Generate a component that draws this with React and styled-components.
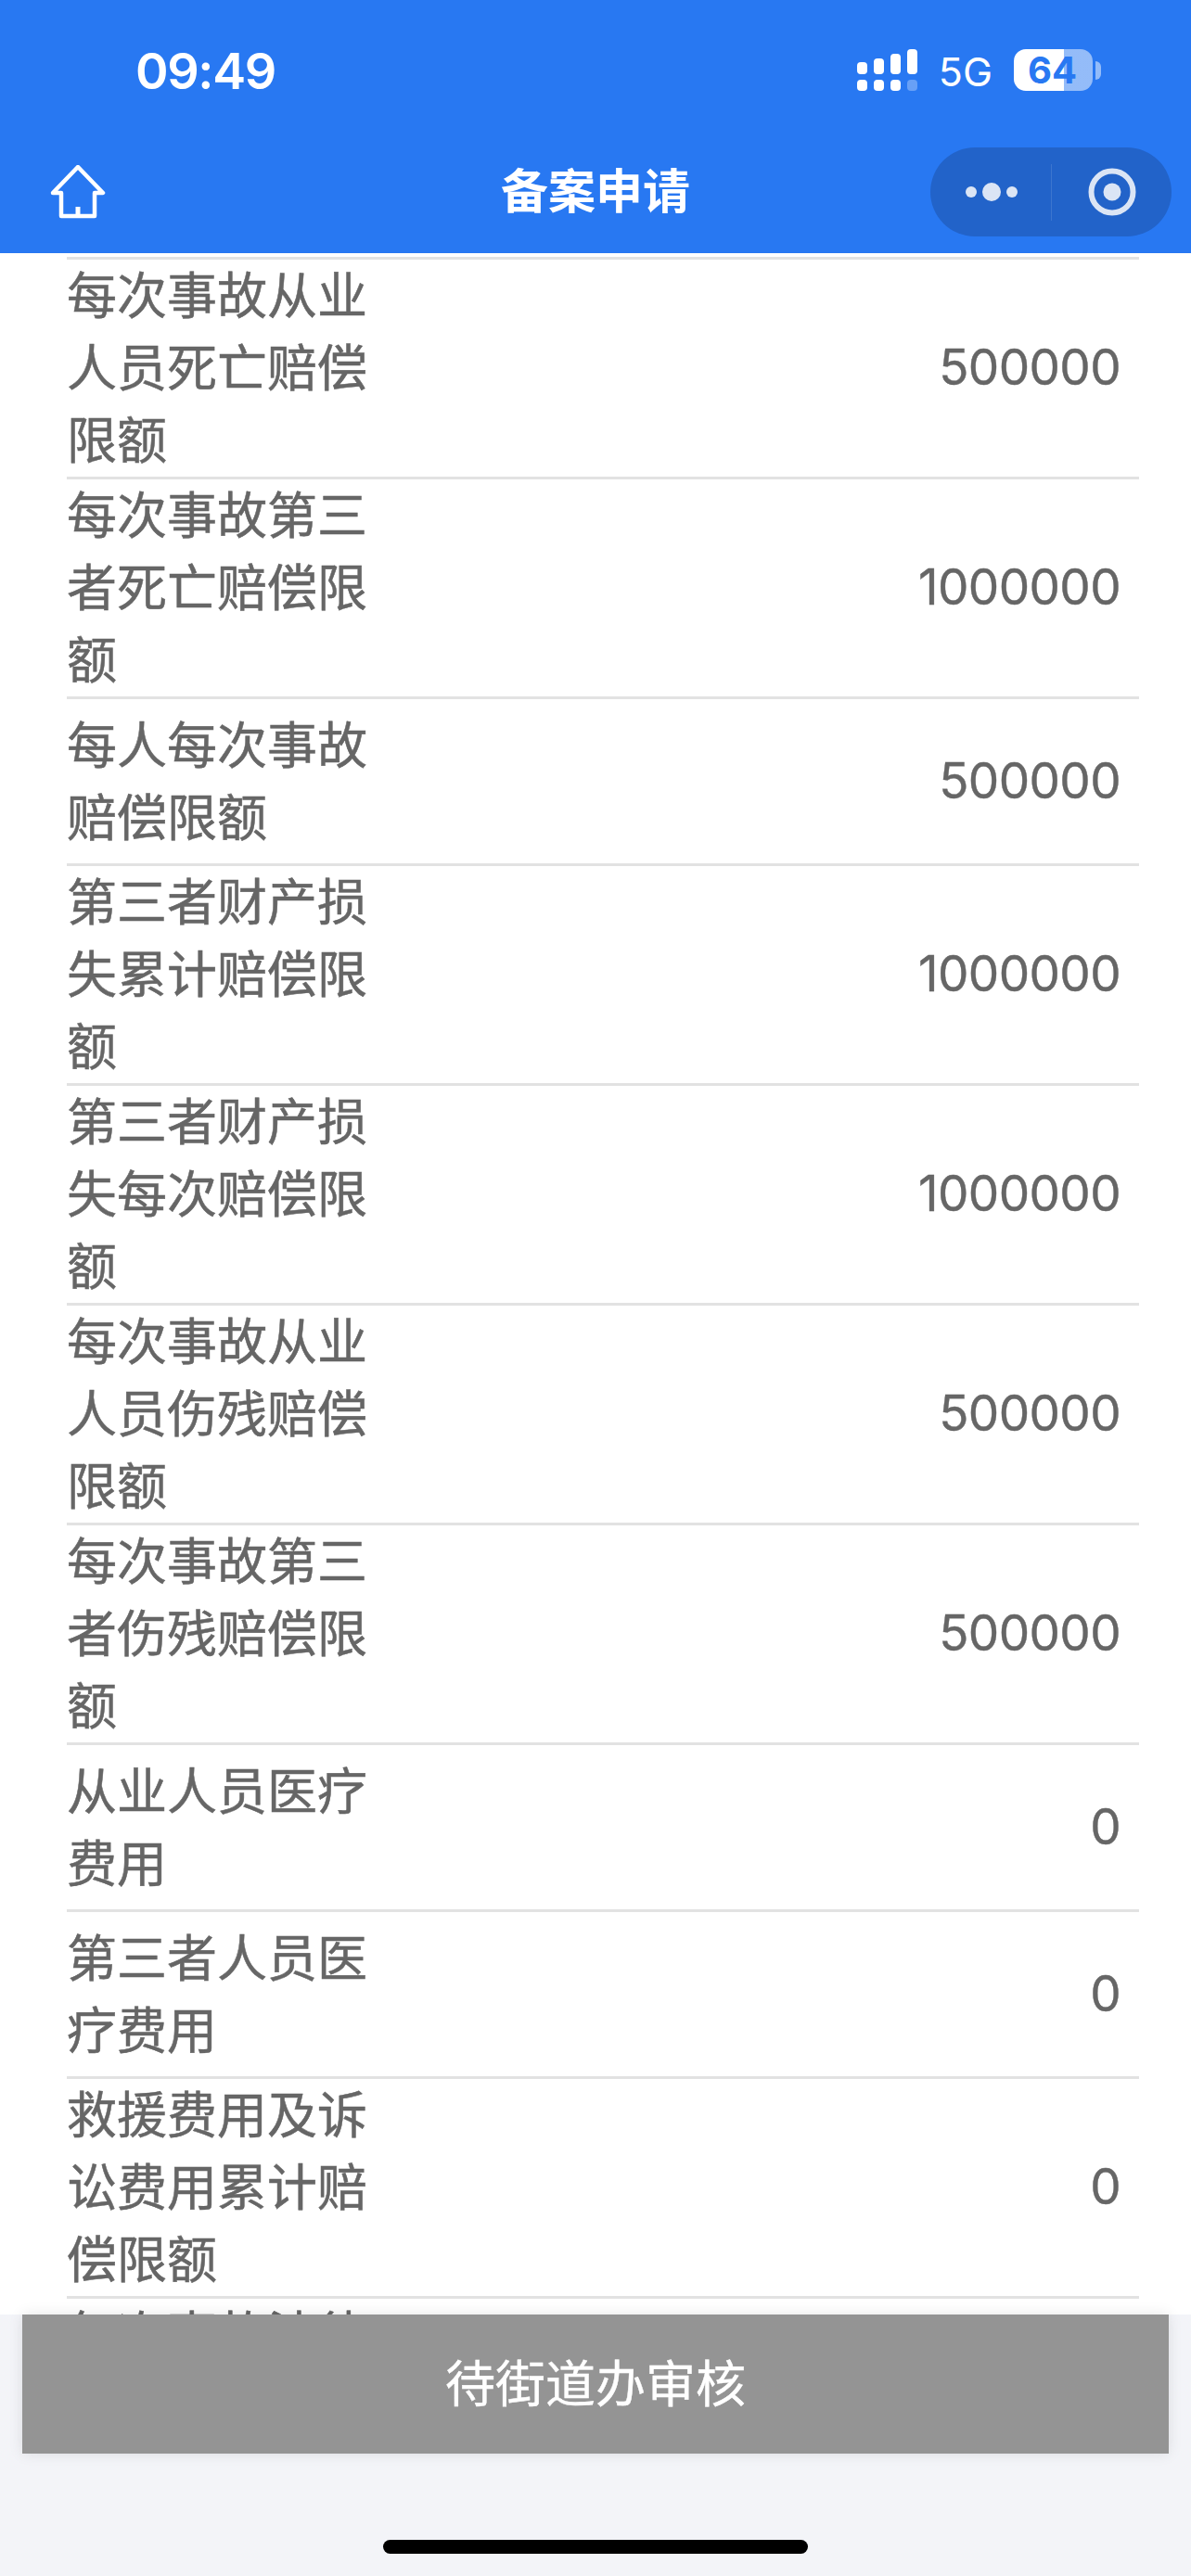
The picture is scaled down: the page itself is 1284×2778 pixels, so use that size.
import React from "react";
import styled, { createGlobalStyle } from "styled-components";

const Global = createGlobalStyle`
  html, body { margin: 0; padding: 0; background: #f3f4f8; }
  * { box-sizing: border-box; }
`;

const CJK = `"Inter", "Noto Sans CJK SC", sans-serif`;

const Page = styled.div`
  width: 1284px;
  height: 2778px;
  display: flex;
  flex-direction: column;
  overflow: hidden;
  font-family: ${CJK};
  background: #fff;
`;

const Header = styled.header`
  flex: 0 0 273px;
  background: #2878f2;
  display: flex;
  flex-direction: column;
  color: #fff;
`;

const StatusBar = styled.div`
  height: 159px;
  padding: 0 97px 0 146px;
  display: flex;
  align-items: flex-start;
  justify-content: space-between;
`;

const Clock = styled.div`
  margin-top: 44px;
  font-size: 54px;
  line-height: 66px;
  font-weight: 600;
  letter-spacing: -1.4px;
`;

const StatusRight = styled.div`
  margin-top: 53px;
  display: flex;
  align-items: flex-start;
`;

const Network = styled.div`
  margin: 1px 23px 0 22px;
  font-size: 43px;
  line-height: 46px;
  font-weight: 400;
`;

const Battery = styled.div`
  position: relative;
  width: 85px;
  height: 45px;
  border-radius: 13px;
  overflow: hidden;
  background: linear-gradient(90deg, #fff 0 54px, rgba(255, 255, 255, 0.5) 54px 100%);
  color: #2878f2;
  font-size: 40px;
  line-height: 45px;
  font-weight: 700;
  text-align: center;
  padding-right: 2px;
`;

const BatteryNub = styled.div`
  width: 6px;
  height: 20px;
  margin: 13px 0 0 3px;
  border-radius: 0 10px 10px 0;
  background: rgba(255, 255, 255, 0.5);
`;

const NavBar = styled.div`
  flex: 1;
  display: flex;
  align-items: flex-start;
  justify-content: space-between;
  padding: 0 21px 0 54px;
  position: relative;
`;

const Title = styled.div`
  position: absolute;
  left: 0;
  right: 0;
  top: 19px;
  text-align: center;
  font-size: 51px;
  line-height: 58px;
  font-weight: 600;
`;

const HomeButton = styled.div`
  margin-top: 19px;
  width: 60px;
  height: 58px;
`;

const Capsule = styled.div`
  width: 260px;
  height: 96px;
  border-radius: 48px;
  background: #2263c9;
  display: flex;
  align-items: center;
`;

const CapsuleCell = styled.div`
  flex: 1;
  height: 61px;
  display: flex;
  align-items: center;
  justify-content: center;
  padding-left: ${(p) => (p.$end ? "0" : "1px")};
`;

const CapsuleDivider = styled.div`
  width: 1px;
  height: 61px;
  background: rgba(255, 255, 255, 0.12);
`;

const List = styled.main`
  flex: 1;
  min-height: 0;
  overflow: hidden;
  padding: 4px 56px 0 72px;
  background: #fff;
  color: #666;
`;

const Row = styled.div`
  display: flex;
  align-items: center;
  justify-content: space-between;
  min-height: 180px;
  border-top: 3px solid #e2e2e2;
`;

const Label = styled.div`
  flex: 0 0 340px;
  font-size: 54px;
  line-height: 78px;
  font-family: "Noto Sans CJK SC", sans-serif;
  -webkit-text-stroke: 0.5px #666;
  transform: translateY(-3px);
`;

const Value = styled.div`
  padding-right: 20px;
  font-size: 53px;
  line-height: 78px;
  letter-spacing: -0.6px;
  font-family: "Inter", sans-serif;
  font-weight: 400;
  -webkit-text-stroke: 0.4px #666;
  transform: translateY(-1px);
`;

const Footer = styled.footer`
  flex: 0 0 282px;
  background: #f3f4f8;
  display: flex;
  flex-direction: column;
  align-items: center;
  position: relative;
`;

const Action = styled.div`
  width: 1236px;
  height: 150px;
  background: #949494;
  color: #fff;
  font-family: "Noto Sans CJK SC", sans-serif;
  font-size: 54px;
  line-height: 144px;
  text-align: center;
  -webkit-text-stroke: 0.4px #fff;
  box-shadow: 0 0 14px rgba(0, 0, 0, 0.1);
`;

const HomeIndicator = styled.div`
  margin-top: 93px;
  width: 458px;
  height: 15px;
  border-radius: 8px;
  background: #000;
`;

const rows = [
  ["每次事故从业人员死亡赔偿限额", "500000"],
  ["每次事故第三者死亡赔偿限额", "1000000"],
  ["每人每次事故赔偿限额", "500000"],
  ["第三者财产损失累计赔偿限额", "1000000"],
  ["第三者财产损失每次赔偿限额", "1000000"],
  ["每次事故从业人员伤残赔偿限额", "500000"],
  ["每次事故第三者伤残赔偿限额", "500000"],
  ["从业人员医疗费用", "0"],
  ["第三者人员医疗费用", "0"],
  ["救援费用及诉讼费用累计赔偿限额", "0"],
  ["每次事故法律费用累计赔偿限额", "0"],
];

const SignalIcon = () => (
  <svg width="66" height="46" viewBox="0 0 66 46" fill="#fff">
    <rect x="0" y="14" width="11" height="13" rx="4" />
    <rect x="18" y="10" width="11" height="17" rx="4" />
    <rect x="36" y="5" width="11" height="22" rx="4" />
    <rect x="54" y="0" width="11" height="27" rx="4" />
    <rect x="0" y="33" width="11" height="12" rx="4" />
    <rect x="18" y="33" width="11" height="12" rx="4" />
    <rect x="36" y="33" width="11" height="12" rx="4" />
    <rect x="54" y="33" width="11" height="12" rx="4" opacity="0.3" />
  </svg>
);

const HomeIcon = () => (
  <svg width="60" height="58" viewBox="0 0 60 58" fill="none" stroke="#fff" strokeWidth="4.5" strokeLinejoin="round">
    <path d="M30 2 L57 30 H48 V55 H12 V30 H3 Z" />
    <path d="M30 45 V55" strokeWidth="5" />
  </svg>
);

const DotsIcon = () => (
  <svg width="58" height="24" viewBox="0 0 58 24" fill="#dbe5f5">
    <circle cx="7" cy="12" r="6" />
    <circle cx="29" cy="12" r="10" />
    <circle cx="51" cy="12" r="6" />
  </svg>
);

const TargetIcon = () => (
  <svg width="52" height="52" viewBox="0 0 52 52" fill="none">
    <circle cx="26" cy="26" r="22.5" stroke="#dbe5f5" strokeWidth="6" />
    <circle cx="26" cy="26" r="9.5" fill="#dbe5f5" />
  </svg>
);

export default function App() {
  return (
    <Page>
      <Global />
      <Header>
        <StatusBar>
          <Clock>09:49</Clock>
          <StatusRight>
            <SignalIcon />
            <Network>5G</Network>
            <Battery>64</Battery>
            <BatteryNub />
          </StatusRight>
        </StatusBar>
        <NavBar>
          <HomeButton>
            <HomeIcon />
          </HomeButton>
          <Title>备案申请</Title>
          <Capsule>
            <CapsuleCell>
              <DotsIcon />
            </CapsuleCell>
            <CapsuleDivider />
            <CapsuleCell $end>
              <TargetIcon />
            </CapsuleCell>
          </Capsule>
        </NavBar>
      </Header>
      <List>
        {rows.map(([label, value]) => (
          <Row key={label}>
            <Label>{label}</Label>
            <Value>{value}</Value>
          </Row>
        ))}
      </List>
      <Footer>
        <Action>待街道办审核</Action>
        <HomeIndicator />
      </Footer>
    </Page>
  );
}
